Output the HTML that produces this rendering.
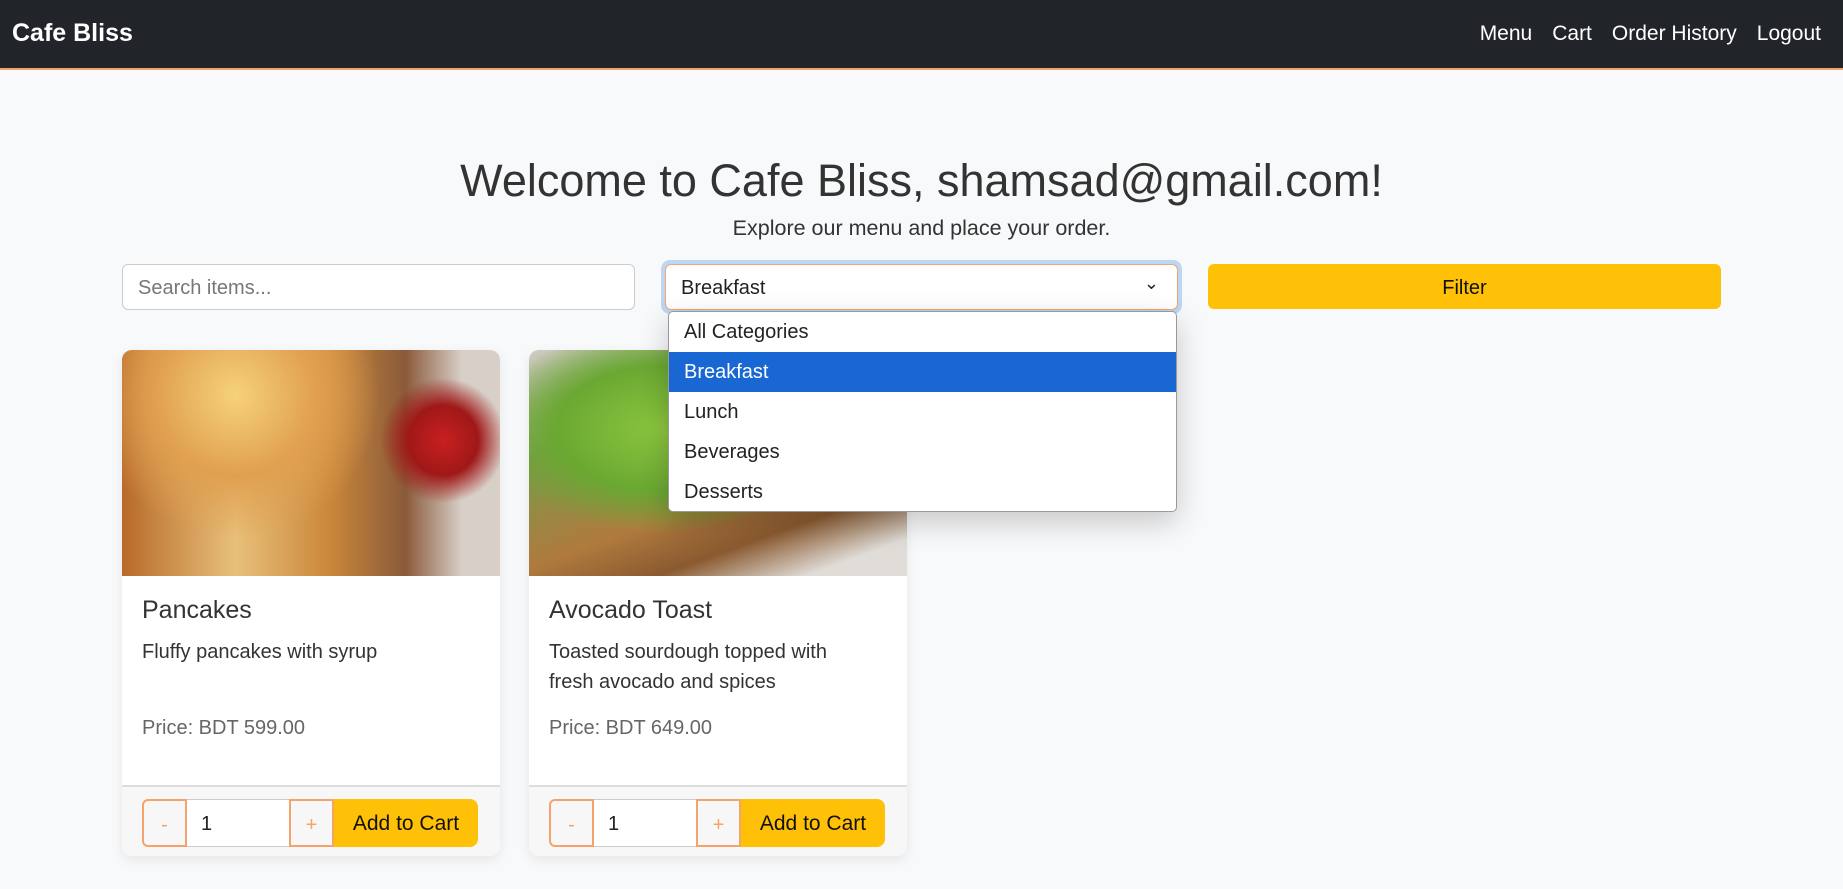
<!DOCTYPE html>
<html><head><meta charset="utf-8"><style>
*{box-sizing:border-box;margin:0;padding:0}
body{width:1843px;height:889px;background:#f8f9fa;font-family:"Liberation Sans",sans-serif;color:#333;position:relative;overflow:hidden}
.nav{position:absolute;left:0;top:0;width:1843px;height:70px;background:#212529;border-bottom:2px solid #f4a46a}
.brand{position:absolute;left:12px;top:19px;color:#fff;font-weight:bold;font-size:25px}
.links{position:absolute;right:22px;top:22px;color:#fff;font-size:21px}
.links span{margin-left:20px}
h1{position:absolute;left:0;width:1843px;top:155px;text-align:center;font-weight:normal;font-size:45px;color:#333}
.sub{position:absolute;left:0;width:1843px;top:216px;text-align:center;font-size:21.5px;color:#333}
.inp{position:absolute;top:264px;height:46px;background:#fff;border:1px solid #ccc;border-radius:6px;font-size:20px;padding:12px 15px}
.ring{position:absolute;left:661px;top:260px;width:521px;height:54px;border-radius:9px;background:#bcd6f5}
.dd{position:absolute;left:668px;top:311px;width:509px;height:201px;background:#fff;border:1px solid #999;border-radius:5px;box-shadow:0 10px 30px rgba(0,0,0,.2);font-size:20px;overflow:hidden}
.dd div{height:40px;padding:9px 15px;color:#222}
.dd .sel{background:#1967d2;color:#fff}
.filter{position:absolute;left:1208px;top:264px;width:513px;height:45px;background:#ffc107;border-radius:6px;text-align:center;font-size:20px;padding-top:13px;color:#111}
.card{position:absolute;top:350px;width:378px;height:506px;background:#fff;border-radius:10px;overflow:hidden;box-shadow:0 4px 12px rgba(0,0,0,.08)}
.img{height:226px}
.t{position:absolute;left:20px;top:246px;font-size:25px;color:#333}
.d{position:absolute;left:20px;top:287px;font-size:20px;line-height:30px;color:#333;width:320px}
.p{position:absolute;left:20px;top:367px;font-size:20px;color:#666}
.ft{position:absolute;left:0;top:435px;width:378px;height:71px;background:#f7f7f7;border-top:2px solid #ddd}
.b{position:absolute;top:12px;height:48px;font-size:20px;padding-top:13px}
.m{left:20px;width:45px;border:2px solid #f4a46a;border-radius:6px 0 0 6px;text-align:center;color:#f4a46a}
.q{left:65px;width:102px;background:#fff;border-top:1px solid #ccc;border-bottom:1px solid #ccc;padding-left:14px;color:#222}
.pl{left:167px;width:45px;border:2px solid #f4a46a;text-align:center;color:#f4a46a}
.a{left:212px;width:144px;background:#ffc107;border-radius:0 8px 8px 0;text-align:center;color:#111;font-size:21px}
</style></head><body>
<div class="nav"><div class="brand">Cafe Bliss</div><div class="links"><span>Menu</span><span>Cart</span><span>Order History</span><span>Logout</span></div></div>
<h1>Welcome to Cafe Bliss, shamsad@gmail.com!</h1>
<div class="sub">Explore our menu and place your order.</div>
<div class="inp" style="left:122px;width:513px;color:#777">Search items...</div>
<div class="ring"></div>
<div class="inp" style="left:665px;width:513px;border-color:#f4a46a;color:#222">Breakfast<span style="position:absolute;right:18px;top:8px;font-size:18px">⌄</span></div>
<div class="filter">Filter</div>
<div class="card" style="left:122px"><div class="img" style="background:radial-gradient(circle at 30% 20%,#f6d27a 0,#e0a050 25%,transparent 45%),radial-gradient(circle at 85% 40%,#c82020 0,#a01818 10%,transparent 18%),linear-gradient(90deg,#b86a2a 0%,#e8c07a 30%,#c9873a 55%,#8a5a3a 75%,#d8d0c8 90%);"></div>
<div class="t">Pancakes</div><div class="d">Fluffy pancakes with syrup</div><div class="p">Price: BDT 599.00</div>
<div class="ft"><div class="b m">-</div><div class="b q">1</div><div class="b pl">+</div><div class="b a">Add to Cart</div></div></div>
<div class="card" style="left:529px"><div class="img" style="background:radial-gradient(ellipse at 35% 35%,#8cc63e 0,#6aa832 30%,transparent 50%),linear-gradient(160deg,#d0ccc4 0%,#7a9a4a 30%,#b07a3e 60%,#8a5a30 75%,#e0ddd8 90%);"></div>
<div class="t">Avocado Toast</div><div class="d">Toasted sourdough topped with fresh avocado and spices</div><div class="p">Price: BDT 649.00</div>
<div class="ft"><div class="b m">-</div><div class="b q">1</div><div class="b pl">+</div><div class="b a">Add to Cart</div></div></div>
<div class="dd"><div>All Categories</div><div class="sel">Breakfast</div><div>Lunch</div><div>Beverages</div><div>Desserts</div></div>
</body></html>
